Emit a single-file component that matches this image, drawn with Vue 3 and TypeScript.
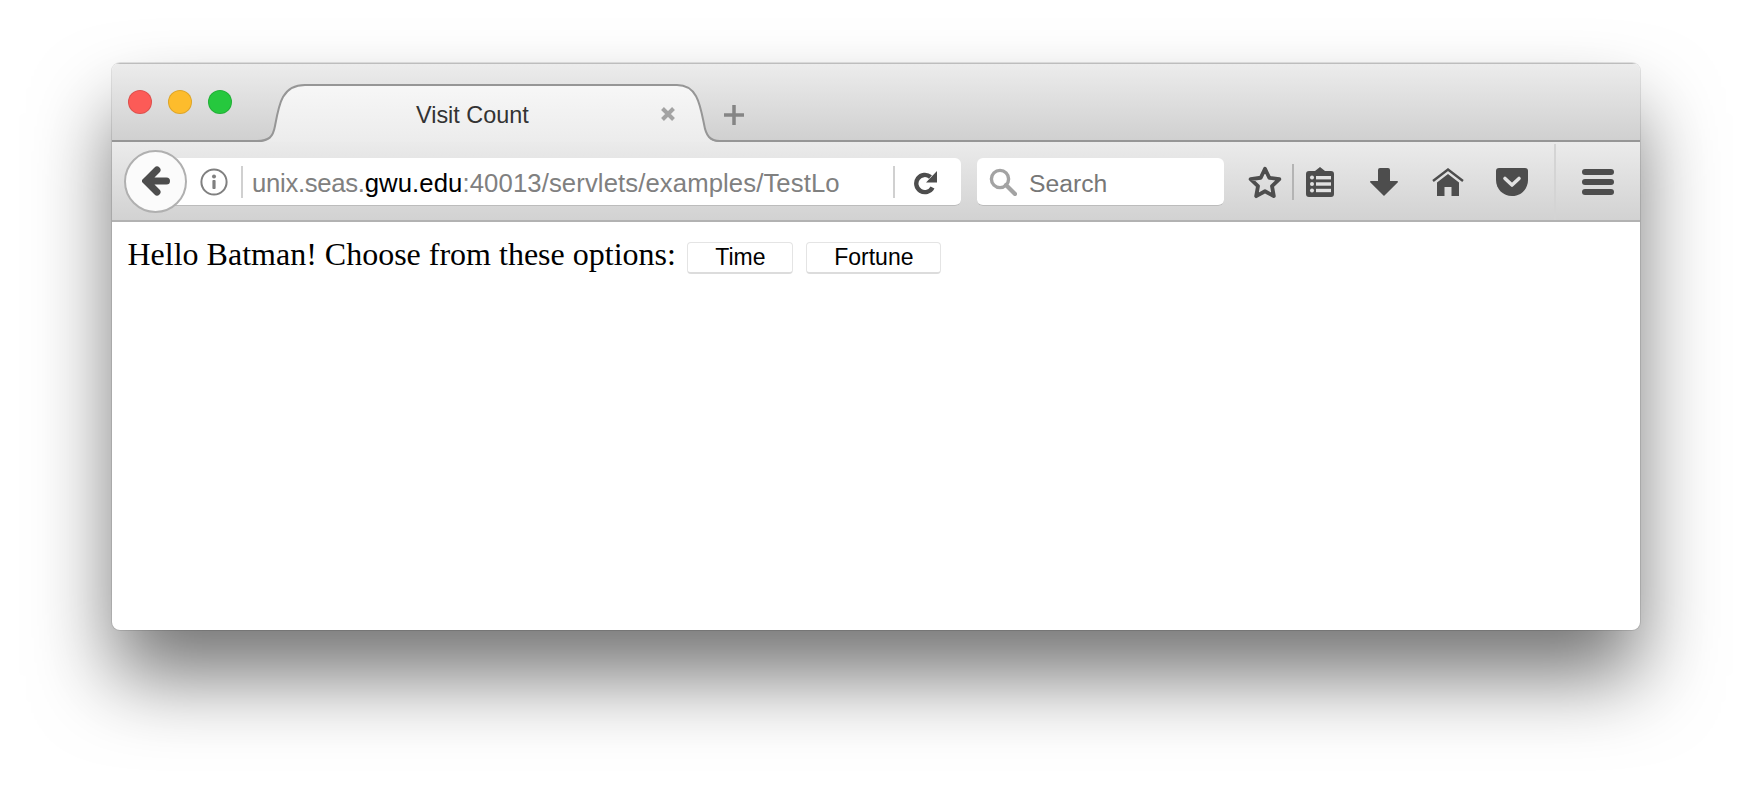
<script setup lang="ts">
const lights = ['red', 'yellow', 'green']
</script>

<template>
  <div class="page">
    <div class="window">
      <div class="tabstrip">
        <div class="lights">
          <span v-for="l in lights" :key="l" class="light" :class="l"></span>
        </div>
        <div class="tab">
          <svg class="tab-bg" width="463" height="58" viewBox="0 0 463 58">
            <defs>
              <linearGradient id="tabfill" x1="0" y1="0" x2="0" y2="1">
                <stop offset="0" stop-color="#f7f7f7" />
                <stop offset="1" stop-color="#ececec" />
              </linearGradient>
            </defs>
            <path d="M0 58 C12 58 16 53 18 42 C22 20 25 1 48 1 H420 C440 1 443 20 447 40 C449 52 453 58 463 58 Z" fill="url(#tabfill)" />
            <path d="M0 57 C12 57 16 53 18 42 C22 20 25 1 48 1 H420 C440 1 443 20 447 40 C449 52 453 57 463 57" fill="none" stroke="#969696" stroke-width="2" />
          </svg>
          <span class="tab-title">Visit Count</span>
          <svg class="tab-close" width="16" height="16" viewBox="0 0 16 16">
            <path d="M2.5 2.5 L13.5 13.5 M13.5 2.5 L2.5 13.5" stroke="#a3a3a3" stroke-width="4" />
          </svg>
        </div>
        <svg class="newtab" width="22" height="22" viewBox="0 0 22 22">
          <path d="M11 1 V21 M1 11 H21" stroke="#858585" stroke-width="3.5" />
        </svg>
      </div>

      <div class="toolbar">
        <button class="back">
          <svg width="28" height="32" viewBox="0 0 28 32">
            <path d="M24.5 16 H6 M15 5 L4 16 L15 27" fill="none" stroke="#4d4d4d" stroke-width="7" stroke-linecap="round" stroke-linejoin="miter" />
          </svg>
        </button>
        <div class="urlbar">
          <svg class="info" width="28" height="28" viewBox="0 0 28 28">
            <circle cx="14" cy="14" r="12.6" fill="none" stroke="#808080" stroke-width="2" />
            <circle cx="14" cy="8.5" r="2" fill="#808080" />
            <rect x="12.4" y="12" width="3.2" height="9" rx="1" fill="#808080" />
          </svg>
          <span class="sep"></span>
          <span class="url"><i>unix.seas.</i><b>gwu.edu</b>:40013/servlets/examples/TestLo</span>
          <span class="sep"></span>
          <svg class="reload" width="24" height="26" viewBox="0 0 24 26">
            <path d="M18.5 18.5 A8.6 8.6 0 1 1 16.5 8" fill="none" stroke="#4d4d4d" stroke-width="4.4" />
            <path d="M23 2 V13.5 H12 Z" fill="#4d4d4d" />
          </svg>
        </div>
        <div class="searchbar">
          <svg width="28" height="28" viewBox="0 0 28 28">
            <circle cx="11" cy="11" r="8.6" fill="none" stroke="#a3a3a3" stroke-width="3.4" />
            <path d="M17 17 L26 26" stroke="#a3a3a3" stroke-width="4.2" stroke-linecap="round" />
          </svg>
          <span>Search</span>
        </div>

        <div class="cell star">
          <svg width="34" height="34" viewBox="0 0 32 32">
            <path d="M16 3.5 L20 12 L29.5 13.3 L22.6 19.9 L24.3 29.3 L16 24.7 L7.7 29.3 L9.4 19.9 L2.5 13.3 L12 12 Z" fill="none" stroke="#4d4d4d" stroke-width="3.6" stroke-linejoin="round" />
          </svg>
        </div>
        <span class="star-sep"></span>
        <div class="cell list">
          <svg width="28" height="30" viewBox="0 0 28 30">
            <path d="M14 0 L19 4 H25 A3 3 0 0 1 28 7 V27 A3 3 0 0 1 25 30 H3 A3 3 0 0 1 0 27 V7 A3 3 0 0 1 3 4 H9 Z" fill="#4d4d4d" />
            <g fill="#e2e2e2">
              <circle cx="6" cy="10.5" r="2" />
              <circle cx="6" cy="17" r="2" />
              <circle cx="6" cy="23.5" r="2" />
              <rect x="10" y="9" width="15" height="3.4" />
              <rect x="10" y="15.3" width="15" height="3.4" />
              <rect x="10" y="21.8" width="15" height="3.4" />
            </g>
          </svg>
        </div>
        <div class="cell">
          <svg width="28" height="28" viewBox="0 0 28 28">
            <path d="M10 0 H18 A2 2 0 0 1 20 2 V13 H27 A1 1 0 0 1 27.6 14.6 L14 28 L0.4 14.6 A1 1 0 0 1 1 13 H8 V2 A2 2 0 0 1 10 0 Z" fill="#4d4d4d" />
          </svg>
        </div>
        <div class="cell">
          <svg width="32" height="28" viewBox="0 0 32 28">
            <path d="M1 13 L16 1.5 L31 13" fill="none" stroke="#4d4d4d" stroke-width="2.4" />
            <path d="M16 6 L27 14.5 V28 H19.5 V19 H12.5 V28 H5 V14.5 Z" fill="#4d4d4d" />
          </svg>
        </div>
        <div class="cell">
          <svg width="32" height="28" viewBox="0 0 32 28">
            <path d="M3 0 H29 A3 3 0 0 1 32 3 V12 C32 21 25 28 16 28 C7 28 0 21 0 12 V3 A3 3 0 0 1 3 0 Z" fill="#4d4d4d" />
            <path d="M9 10.5 L16 17 L23 10.5" fill="none" stroke="#e2e2e2" stroke-width="3.6" stroke-linecap="round" stroke-linejoin="round" />
          </svg>
        </div>
        <span class="divider"></span>
        <div class="cell menu">
          <span class="bar"></span>
          <span class="bar"></span>
          <span class="bar"></span>
        </div>
      </div>

      <div class="content">
        Hello Batman! Choose from these options:
        <button class="page-btn time">Time</button>
        <button class="page-btn fortune">Fortune</button>
      </div>
    </div>
  </div>
</template>

<style scoped>
.page {
  height: 790px;
  box-sizing: border-box;
  padding: 63px 0 0 112px;
  background: #fff;
  overflow: hidden;
}
.window {
  width: 1528px;
  height: 567px;
  border-radius: 8px;
  background: #fff;
  display: flex;
  flex-direction: column;
  overflow: hidden;
  box-shadow: 0 0 0 1px rgba(0, 0, 0, 0.1), 0 48px 80px -2px rgba(0, 0, 0, 0.55);
  font-family: "Liberation Sans", Arial, sans-serif;
}
.tabstrip {
  height: 79px;
  flex: none;
  box-sizing: border-box;
  padding-top: 20px;
  display: flex;
  align-items: flex-start;
  background: linear-gradient(#ececec, #d0d0d0);
  border-top: 1px solid #bdbdbd;
  border-bottom: 2px solid #969696;
}
.lights {
  display: flex;
  gap: 16px;
  padding: 6px 0 0 16px;
  width: 145px;
  box-sizing: border-box;
}
.light {
  width: 24px;
  height: 24px;
  border-radius: 50%;
  box-sizing: border-box;
  border: 1px solid rgba(0, 0, 0, 0.12);
}
.red { background: #fc5b57; }
.yellow { background: #fdbc2c; }
.green { background: #26c83e; }
.tab {
  position: relative;
  width: 463px;
  height: 58px;
  flex: none;
  display: flex;
  align-items: center;
  color: #333;
  font-size: 23.4px;
  z-index: 1;
}
.tab-bg {
  position: absolute;
  left: 0;
  top: 0;
}
.tab-title {
  position: relative;
  margin-left: 159px;
  margin-top: 5px;
}
.tab-close {
  position: absolute;
  left: 403px;
  top: 22px;
}
.newtab {
  margin: 20px 0 0 3px;
}
.toolbar {
  height: 80px;
  flex: none;
  box-sizing: border-box;
  display: flex;
  align-items: center;
  padding-left: 12px;
  padding-top: 2px;
  background: linear-gradient(#ebebeb, #d2d2d2);
  border-bottom: 2px solid #b2b2b2;
}
.back {
  width: 63px;
  height: 63px;
  padding: 0;
  margin-top: -2px;
  flex: none;
  border-radius: 50%;
  border: 2px solid #b0b0b0;
  background: #fbfbfb;
  z-index: 1;
  display: flex;
  align-items: center;
  justify-content: center;
}
.urlbar {
  margin-left: -20px;
  width: 794px;
  height: 48px;
  flex: none;
  box-sizing: border-box;
  padding-left: 25px;
  display: flex;
  align-items: center;
  background: #fff;
  border-radius: 0 6px 6px 0;
  border-bottom: 1px solid #bcbcbc;
  font-size: 25.7px;
  color: #808080;
}
.info {
  margin-left: 8px;
}
.sep {
  width: 2px;
  height: 32px;
  background: #d0d0d0;
  flex: none;
}
.urlbar .info + .sep {
  margin-left: 13px;
}
.url {
  margin-left: 9px;
  margin-top: 4px;
  width: 641px;
  white-space: nowrap;
  overflow: hidden;
  letter-spacing: 0.1px;
}
.url i {
  font-style: normal;
  letter-spacing: -0.3px;
}
.url b {
  font-weight: normal;
  color: #000;
}
.reload {
  margin-left: 19px;
}
.searchbar {
  margin-left: 16px;
  width: 247px;
  height: 48px;
  flex: none;
  box-sizing: border-box;
  padding-left: 12px;
  display: flex;
  align-items: center;
  gap: 12px;
  background: #fff;
  border-radius: 6px;
  border-bottom: 1px solid #bcbcbc;
  font-size: 24.7px;
  color: #777;
}
.searchbar span {
  margin-top: 4px;
}
.cell {
  width: 64px;
  flex: none;
  display: flex;
  align-items: center;
  justify-content: center;
}
.star {
  width: 56px;
  margin-left: 13px;
}
.star-sep {
  width: 2px;
  height: 36px;
  background: #b4b4b4;
  flex: none;
  margin-left: -1px;
}
.list {
  width: 52px;
  margin-right: 6px;
}
.divider {
  align-self: stretch;
  width: 2px;
  margin-left: 10px;
  background: #d4d4d4;
  flex: none;
}
.menu {
  width: 84px;
  flex-direction: column;
  gap: 4px;
}
.bar {
  width: 32px;
  height: 6px;
  border-radius: 3px;
  background: #4d4d4d;
}
.content {
  padding: 14px 16px 14px 15.5px;
  font-family: "Liberation Serif", "Times New Roman", serif;
  font-size: 32px;
  color: #000;
}
.page-btn {
  height: 32px;
  padding: 0;
  margin-left: 3.5px;
  box-sizing: border-box;
  border: 1px solid #e4e4e4;
  border-bottom: 2px solid #dcdcdc;
  border-radius: 4px;
  background: #fff;
  font-family: "Liberation Sans", Arial, sans-serif;
  font-size: 23px;
  color: #000;
  vertical-align: 0;
}
.time {
  width: 106px;
}
.fortune {
  width: 135px;
  margin-left: 13px;
}
</style>
